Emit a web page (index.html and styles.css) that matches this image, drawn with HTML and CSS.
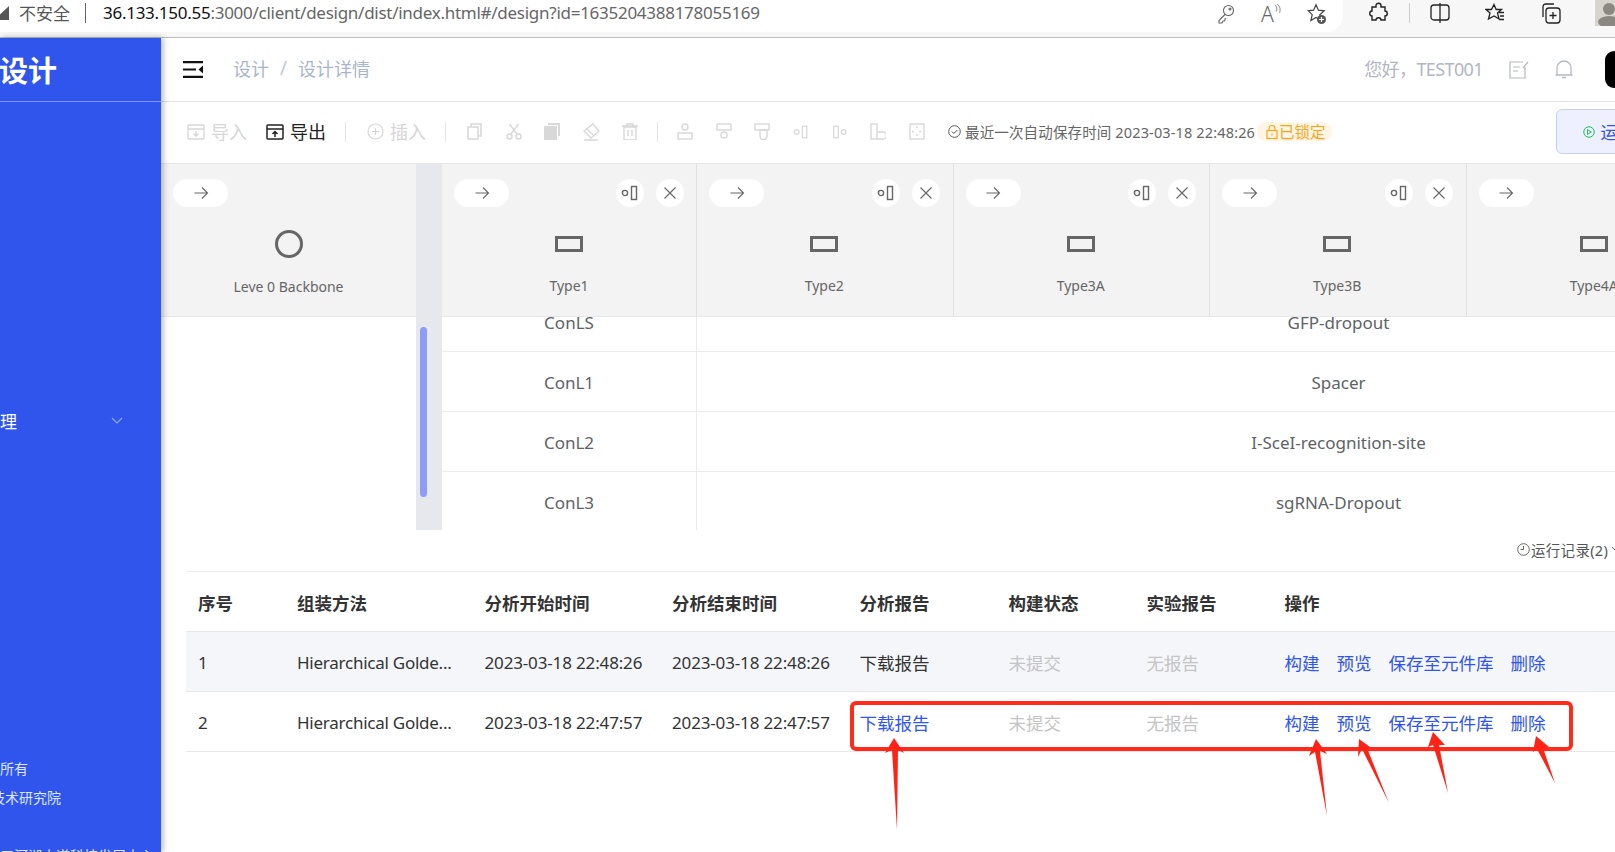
FILE: index.html
```html
<!DOCTYPE html>
<html lang="zh-CN">
<head>
    <meta charset="UTF-8">
    <meta name="viewport" content="width=device-width, initial-scale=1.0">
    <title>设计详情</title>
    <link rel="stylesheet" href="styles.css">
</head>
<body>
    <svg class="defs" width="0" height="0">
        <symbol id="arrow-right" viewBox="0 0 16 16"><path d="M1.5 8h13M9 2.5 14.5 8 9 13.5" fill="none" stroke="currentColor" stroke-width="1.1"/></symbol>
        <symbol id="left-node" viewBox="0 0 18 16"><circle cx="4" cy="8" r="2.6" fill="none" stroke="currentColor" stroke-width="1.4"/><rect x="10.5" y="1.5" width="5" height="13" fill="none" stroke="currentColor" stroke-width="1.4"/></symbol>
        <symbol id="right-node" viewBox="0 0 18 16"><rect x="2" y="1.5" width="5" height="13" fill="none" stroke="currentColor" stroke-width="1.4"/><circle cx="13" cy="8" r="2.6" fill="none" stroke="currentColor" stroke-width="1.4"/></symbol>
        <symbol id="close" viewBox="0 0 16 16"><path d="M2.5 2.5l11 11M13.5 2.5l-11 11" fill="none" stroke="currentColor" stroke-width="1.1"/></symbol>
        <symbol id="part" viewBox="0 0 28 16"><rect x="1.5" y="1.5" width="25" height="13" fill="none" stroke="currentColor" stroke-width="3"/></symbol>
    </svg>

    <header class="browser-bar">
        <div class="address">
            <svg class="warn" width="9" height="16" viewBox="0 0 9 16"><path d="M9 1v14H-6z" fill="#555"/></svg>
            <span class="not-safe">不安全</span>
            <span class="address-sep"></span>
            <span class="url"><b>36.133.150.55</b>:3000/client/design/dist/index.html#/design?id=1635204388178055169</span>
            <div class="address-icons">
                <svg width="18" height="20" viewBox="0 0 18 20" fill="none" stroke="#666" stroke-width="1.1"><circle cx="11.5" cy="6.5" r="5"/><circle cx="13" cy="5" r="1"/><path d="M8 10.5 2 16.500v2.500h3l1-2h1.500l1-3"/></svg>
                <span class="read-aloud">A<svg width="9" height="14" viewBox="0 0 9 14" fill="none" stroke="#666"><path d="M1 2c3 2 3 5 2 8M4 1c4 3 4 7 3 11"/></svg></span>
                <svg width="20" height="22" viewBox="0 0 20 22"><path d="M9 1.800l2.400 5.400 5.800.6-4.400 3.900 1.300 5.800-5.100-3-5.100 3 1.300-5.800L1.300 7.800l5.300-.6z" fill="#fff" stroke="#444" stroke-width="1.2"/><circle cx="14.500" cy="16.500" r="4.500" fill="#555"/><path d="M14.500 14v5M12 16.500h5" stroke="#fff" stroke-width="1.2"/></svg>
            </div>
        </div>
        <div class="browser-icons">
            <svg width="20" height="22" viewBox="0 0 20 22" fill="none" stroke="#222" stroke-width="1.400"><path d="M7 3.500c0-3 5-3 5 0V5h4v4c3 0 3 5 0 5v4h-4c0-3-5-3-5 0H3v-4c-3 0-3-5 0-5V5h4z"/></svg>
            <span class="bar-sep"></span>
            <svg width="20" height="22" viewBox="0 0 20 22" fill="none" stroke="#222" stroke-width="1.300"><rect x="1" y="3" width="18" height="15" rx="3"/><path d="M10 1v20"/></svg>
            <svg class="fav" width="20" height="20" viewBox="0 0 20 20" fill="none" stroke="#222" stroke-width="1.300"><path d="M9 1.500l2.200 5h5.300l-4 3.500 1.500 6-5-3-5.500 3 1.500-6-4-3.500h5.500zM14 9.500h5M15 13h4M14 16.500h5"/></svg>
            <svg class="collect" width="20" height="22" viewBox="0 0 20 22" fill="none" stroke="#222" stroke-width="1.300"><rect x="5" y="6" width="14" height="15" rx="3"/><path d="M2 15V5c0-2 1-3 3-3h8M12 10v7M8.500 13.500h7"/></svg>
            <svg class="profile" width="20" height="27" viewBox="0 0 20 27"><rect width="20" height="27" fill="#d6d4cf"/><circle cx="14" cy="10" r="6" fill="#8a8880"/><ellipse cx="14" cy="23" rx="11" ry="6" fill="#8a8880"/></svg>
        </div>
    </header>

    <div class="app">
        <aside class="sidebar">
            <div class="logo">设计</div>
            <div class="menu-item">
                <span class="menu-text">管理</span>
                <svg width="12" height="7" viewBox="0 0 12 7" fill="none" stroke="#8ea4f5" stroke-width="1.200"><path d="M1 1l5 5 5-5"/></svg>
            </div>
            <ul class="foot-list">
                <li>所有</li>
                <li class="foot-tech">技术研究院</li>
                <li class="foot-bit">司</li>
                <li>三河湖水道科技发展中心</li>
            </ul>
        </aside>

        <main class="main">
            <div class="topbar">
                <svg class="menu-toggle" width="20" height="17" viewBox="0 0 20 17"><path d="M0 0h20v2.200H0zM0 14.800h20V17H0zM0 7.400h13v2.200H0zM20 4.500v8l-4.500-4z" fill="#111"/></svg>
                <span class="crumb">设计</span>
                <span class="crumb-sep">/</span>
                <span class="crumb">设计详情</span>
                <span class="hello">您好，TEST001</span>
                <svg class="top-icon" width="20" height="18" viewBox="0 0 20 18" fill="none" stroke="#b4b8c4" stroke-width="1.200"><path d="M16 6v11H1V1h13M4 6h7M4 10h5M14 7l5-6"/></svg>
                <svg class="top-icon bell" width="18" height="19" viewBox="0 0 18 19" fill="none" stroke="#b4b8c4" stroke-width="1.300"><path d="M2 15V8a7 7 0 0 1 14 0v7zM.5 15h17M7 17.500h4"/></svg>
                <span class="avatar"></span>
            </div>

            <div class="toolbar">
                <span class="tool tool-off">
                    <svg width="18" height="16" viewBox="0 0 18 16" fill="none" stroke="currentColor" stroke-width="1.300"><rect x="1" y="1" width="16" height="14" rx="1"/><path d="M1 5h16M9 7v5M6.500 9.500 9 12l2.500-2.500"/></svg><span class="tool-text">导入</span>
                </span>
                <span class="tool tool-export">
                    <svg width="18" height="16" viewBox="0 0 18 16" fill="none" stroke="#222" stroke-width="1.500"><rect x="1" y="1" width="16" height="14" rx="1"/><path d="M1 5h16M9 13V8M6.500 10 9 7.500l2.500 2.500"/></svg><span class="tool-text">导出</span>
                </span>
                <span class="tool-sep"></span>
                <span class="tool tool-off">
                    <svg width="17" height="17" viewBox="0 0 17 17" fill="none" stroke="currentColor" stroke-width="1.200"><circle cx="8.500" cy="8.500" r="7.500"/><path d="M8.500 5v7M5 8.500h7"/></svg><span class="tool-text">插入</span>
                </span>
                <span class="tool-sep"></span>
                <div class="tool-icons">
                    <svg width="16" height="17" viewBox="0 0 16 17" fill="none" stroke="#d8d8d8" stroke-width="1.500"><rect x="1" y="4" width="10" height="12"/><path d="M4 4V1h10v12h-3"/></svg>
                    <svg width="16" height="17" viewBox="0 0 16 17" fill="none" stroke="#d8d8d8" stroke-width="1.500"><circle cx="3.500" cy="13.500" r="2.500"/><circle cx="12.500" cy="13.500" r="2.500"/><path d="M5 11 12.500 1M11 11 3.500 1"/></svg>
                    <svg width="16" height="17" viewBox="0 0 16 17"><path d="M4 0h12v13h-2V2H4z" fill="#d8d8d8"/><rect y="3" width="13" height="14" fill="#d8d8d8"/></svg>
                    <svg class="eraser" width="18" height="18" viewBox="0 0 18 18" fill="none" stroke="#d8d8d8" stroke-width="1.300"><path d="M11 1l6 7-8 7-7-7zM4 5l7 7M2 17h14"/></svg>
                    <svg width="16" height="17" viewBox="0 0 16 17" fill="none" stroke="#d8d8d8" stroke-width="1.400"><path d="M2 4h12v13H2zM0 3h16M5 3V1h6v2M6 7v6M10 7v6"/></svg>
                    <span class="tool-sep icon-sep"></span>
                    <svg width="16" height="17" viewBox="0 0 16 17" fill="none" stroke="#d8d8d8" stroke-width="1.400"><circle cx="8" cy="4" r="3"/><rect x="1" y="10" width="14" height="6"/></svg>
                    <svg width="16" height="17" viewBox="0 0 16 17" fill="none" stroke="#d8d8d8" stroke-width="1.400"><rect x="1" y="1" width="14" height="6"/><circle cx="8" cy="12" r="3"/></svg>
                    <svg width="16" height="17" viewBox="0 0 16 17" fill="none" stroke="#d8d8d8" stroke-width="1.400"><rect x="1" y="1" width="14" height="6"/><path d="M6 7h7v6a3 3 0 0 1-7 0z"/></svg>
                    <svg width="16" height="16" viewBox="0 0 18 16" color="#d8d8d8"><use href="#left-node"/></svg>
                    <svg width="16" height="16" viewBox="0 0 18 16" color="#d8d8d8"><use href="#right-node"/></svg>
                    <svg width="16" height="17" viewBox="0 0 16 17" fill="none" stroke="#d8d8d8" stroke-width="1.400"><rect x="1" y="1" width="6" height="15"/><path d="M7 9h6a2.500 2.500 0 0 1 0 7H7"/></svg>
                    <svg width="16" height="17" viewBox="0 0 16 17" fill="none" stroke="#d8d8d8" stroke-width="1.400"><rect x="1" y="1" width="14" height="15"/><path d="M8 3v3M8 11v3M3 8.500h3M10 8.500h3" stroke-dasharray="2 1"/></svg>
                </div>
                <span class="save-info">
                    <svg width="13" height="13" viewBox="0 0 13 13" fill="none" stroke="#555"><circle cx="6.500" cy="6.500" r="5.800"/><path d="M3.800 6.500l2 2 3.500-3.500"/></svg>
                    最近一次自动保存时间 2023-03-18 22:48:26
                </span>
                <span class="locked">
                    <svg width="12" height="14" viewBox="0 0 12 14" fill="none" stroke="#faa41a" stroke-width="1.200"><rect x="1" y="5.500" width="10" height="8"/><path d="M3 5.500V3.500a3 3 0 0 1 6 0v2M6 8.500v2"/></svg>已锁定
                </span>
                <span class="run-btn">
                    <svg width="16" height="16" viewBox="0 0 16 16" fill="none" stroke="#1db954" stroke-width="1.300"><circle cx="8" cy="8" r="7"/><path d="M6 4.800 11 8l-5 3.200z"/></svg>运行
                </span>
            </div>

            <div class="parts">
                <div class="part part-base">
                    <div class="part-actions"><span class="pill"><svg width="16" height="16"><use href="#arrow-right"/></svg></span></div>
                    <span class="base-ring"></span>
                    <span class="part-name">Leve 0 Backbone</span>
                </div>
                <div class="strip"></div>
                <div class="part part-wide">
                    <div class="part-actions"><span class="pill"><svg width="16" height="16"><use href="#arrow-right"/></svg></span><span class="round push"><svg width="18" height="16"><use href="#left-node"/></svg></span><span class="round"><svg width="16" height="16"><use href="#close"/></svg></span></div>
                    <svg class="part-icon" width="28" height="16"><use href="#part"/></svg>
                    <span class="part-name">Type1</span>
                </div>
                <div class="part">
                    <div class="part-actions"><span class="pill"><svg width="16" height="16"><use href="#arrow-right"/></svg></span><span class="round push"><svg width="18" height="16"><use href="#left-node"/></svg></span><span class="round"><svg width="16" height="16"><use href="#close"/></svg></span></div>
                    <svg class="part-icon" width="28" height="16"><use href="#part"/></svg>
                    <span class="part-name">Type2</span>
                </div>
                <div class="part">
                    <div class="part-actions"><span class="pill"><svg width="16" height="16"><use href="#arrow-right"/></svg></span><span class="round push"><svg width="18" height="16"><use href="#left-node"/></svg></span><span class="round"><svg width="16" height="16"><use href="#close"/></svg></span></div>
                    <svg class="part-icon" width="28" height="16"><use href="#part"/></svg>
                    <span class="part-name">Type3A</span>
                </div>
                <div class="part">
                    <div class="part-actions"><span class="pill"><svg width="16" height="16"><use href="#arrow-right"/></svg></span><span class="round push"><svg width="18" height="16"><use href="#left-node"/></svg></span><span class="round"><svg width="16" height="16"><use href="#close"/></svg></span></div>
                    <svg class="part-icon" width="28" height="16"><use href="#part"/></svg>
                    <span class="part-name">Type3B</span>
                </div>
                <div class="part">
                    <div class="part-actions"><span class="pill"><svg width="16" height="16"><use href="#arrow-right"/></svg></span></div>
                    <svg class="part-icon" width="28" height="16"><use href="#part"/></svg>
                    <span class="part-name">Type4A</span>
                </div>
            </div>

            <div class="seq-body">
                <div class="seq-blank"></div>
                <div class="strip"><span class="thumb"></span></div>
                <div class="seq-rows">
                    <div class="seq-row seq-row-cut"><span class="seq-a">ConLS</span><span class="seq-b">GFP-dropout</span></div>
                    <div class="seq-row"><span class="seq-a">ConL1</span><span class="seq-b">Spacer</span></div>
                    <div class="seq-row"><span class="seq-a">ConL2</span><span class="seq-b">I-SceI-recognition-site</span></div>
                    <div class="seq-row"><span class="seq-a">ConL3</span><span class="seq-b">sgRNA-Dropout</span></div>
                </div>
            </div>

            <div class="run-log">
                <svg width="13" height="13" viewBox="0 0 13 13" fill="none" stroke="#666"><circle cx="6.500" cy="6.500" r="5.800"/><path d="M6.500 3v3.500H3.500"/></svg>
                <span>运行记录(2)</span>
                <svg class="log-chevron" width="10" height="6" viewBox="0 0 10 6" fill="none" stroke="#666"><path d="M1 1l4 4 4-4"/></svg>
            </div>

            <table class="runs">
                <thead>
                    <tr>
                        <th class="c-no">序号</th>
                        <th class="c-way">组装方法</th>
                        <th class="c-time">分析开始时间</th>
                        <th class="c-time">分析结束时间</th>
                        <th class="c-report">分析报告</th>
                        <th class="c-state">构建状态</th>
                        <th class="c-state">实验报告</th>
                        <th>操作</th>
                    </tr>
                </thead>
                <tbody>
                    <tr class="row-hover">
                        <td>1</td>
                        <td class="way">Hierarchical Golde...</td>
                        <td>2023-03-18 22:48:26</td>
                        <td>2023-03-18 22:48:26</td>
                        <td>下载报告</td>
                        <td class="muted">未提交</td>
                        <td class="muted">无报告</td>
                        <td class="ops"><a>构建</a><a>预览</a><a>保存至元件库</a><a>删除</a></td>
                    </tr>
                    <tr>
                        <td>2</td>
                        <td class="way">Hierarchical Golde...</td>
                        <td>2023-03-18 22:47:57</td>
                        <td>2023-03-18 22:47:57</td>
                        <td class="ops"><a>下载报告</a></td>
                        <td class="muted">未提交</td>
                        <td class="muted">无报告</td>
                        <td class="ops"><a>构建</a><a>预览</a><a>保存至元件库</a><a>删除</a></td>
                    </tr>
                </tbody>
            </table>
        </main>
    </div>

    <!-- red marks drawn over the page -->
    <div class="red-box"></div>
    <svg class="red-arrows" width="1615" height="852" viewBox="0 0 1615 852">
        <path d="M894 738 904 753 898 750 897 830 892 750 885 753z"/>
        <path d="M1316 739 1327 754 1320 751 1327 816 1315 752 1309 756z"/>
        <path d="M1359 739 1370 747 1367 748 1389 803 1362 749 1358 757z"/>
        <path d="M1433 732 1445 745 1439 745 1448 793 1433 745 1428 747z"/>
        <path d="M1536 736 1549 747 1543 748 1555 783 1537 749 1533 752z"/>
    </svg>
</body>
</html>
```

FILE: styles.css
```css
* {
    box-sizing: border-box;
}

html, body {
    margin: 0;
    padding: 0;
    width: 1615px;
    height: 852px;
    overflow: hidden;
    background-color: #fff;
    font-family: "Noto Sans", "Noto Sans CJK SC", sans-serif;
    color: #333;
}

.defs {
    position: absolute;
}

/* browser chrome */
.browser-bar {
    height: 38px;
    display: flex;
    background-color: #f7f7f7;
    border-bottom: 1px solid #bdbdbd;
}

.address {
    width: 1345px;
    height: 32px;
    display: flex;
    align-items: center;
    padding-bottom: 7px;
    background-color: #fff;
    border-bottom-right-radius: 16px;
    font-size: 17px;
}

.warn {
    margin-right: 10px;
}

.not-safe {
    width: 52px;
    color: #555;
    white-space: nowrap;
}

.address-sep {
    width: 1px;
    height: 20px;
    margin: 0 17px 0 14px;
    background-color: #666;
}

.url {
    color: #666;
    letter-spacing: -0.27px;
    white-space: nowrap;
}

.url b {
    font-weight: 400;
    color: #111;
}

.address-icons {
    display: flex;
    align-items: center;
    gap: 26px;
    position: absolute;
    left: 1217px;
    top: 2px;
}

.read-aloud {
    display: flex;
    width: 20px;
    font-size: 21px;
    line-height: 24px;
    color: #666;
    font-weight: 300;
}

.browser-icons {
    flex: 1;
    height: 32px;
    display: flex;
    align-items: center;
    padding: 0 0 7px 26px;
}

.bar-sep {
    width: 1px;
    height: 20px;
    margin: 0 20px;
    background-color: #ccc;
}

.fav {
    margin-left: 35px;
}

.collect {
    margin-left: 36px;
}

.profile {
    margin-left: 34px;
}

.app {
    display: flex;
    height: 814px;
}

/* sidebar */
.sidebar {
    width: 161px;
    flex: none;
    position: relative;
    overflow: hidden;
    background-color: #2f55ed;
    box-shadow: 2px 0 6px rgba(0, 0, 0, 0.3);
    color: #fff;
}

.logo {
    height: 64px;
    margin-left: -1px;
    font-size: 29px;
    font-weight: 700;
    line-height: 65px;
    border-bottom: 1px solid #7e97f5;
}

.menu-item {
    display: flex;
    justify-content: space-between;
    align-items: center;
    height: 24px;
    margin-top: 306px;
    padding-right: 38px;
    font-size: 17px;
}

.menu-text {
    margin-left: -17px;
}

.foot-list {
    list-style: none;
    margin: 322px 0 0;
    padding: 0;
    font-size: 14px;
    line-height: 29px;
    color: #dfe5fc;
}

.foot-list li {
    white-space: nowrap;
}

.foot-tech {
    margin-left: -9px;
}

.foot-bit {
    margin-left: -13px;
}

/* main column */
.main {
    flex: 1;
    min-width: 0;
    overflow: hidden;
}

.topbar {
    height: 64px;
    display: flex;
    align-items: center;
    padding-left: 22px;
    border-bottom: 1px solid #e4e4e4;
    font-size: 18px;
    color: #a9b6c9;
}

.menu-toggle {
    margin-right: 30px;
}

.crumb,
.crumb-sep,
.hello {
    margin-bottom: 3px;
}

.crumb-sep {
    margin-left: 11px;
    margin-right: 11px;
    font-size: 19px;
    color: #c0c6d2;
}

.hello {
    margin-left: auto;
    color: #b2b6c2;
    letter-spacing: -0.6px;
}

.top-icon {
    margin-left: 26px;
}

.bell {
    margin-left: 26px;
}

.avatar {
    width: 30px;
    height: 37px;
    margin-left: 32px;
    margin-right: -20px;
    background-color: #000;
    border-radius: 9px;
}

.toolbar {
    height: 61px;
    display: flex;
    align-items: center;
    padding: 0 0 2px 26px;
    white-space: nowrap;
    font-size: 18px;
}

.toolbar > * {
    flex: none;
}

.tool {
    display: flex;
    align-items: center;
    gap: 6px;
}

.tool-text {
    margin-bottom: 2px;
}

.tool-off {
    color: #d6d6d6;
}

.tool-export {
    margin-left: 19px;
    color: #222;
}

.tool-sep {
    width: 1px;
    height: 20px;
    margin: 0 21px 0 19px;
    background-color: #e6e6e6;
}

.tool-icons {
    display: flex;
    align-items: center;
    gap: 22.7px;
}

.eraser {
    margin: 0 -1px;
}

.icon-sep {
    margin: 0 -3.7px 0 -3.5px;
}

.save-info {
    display: flex;
    align-items: center;
    gap: 4px;
    margin-left: 23px;
    font-size: 14.5px;
    letter-spacing: 0.14px;
    color: #666;
}

.locked {
    display: flex;
    align-items: center;
    gap: 1px;
    height: 19px;
    padding: 0 6px 0 9px;
    margin-left: 2px;
    background-color: #fff5e4;
    border-radius: 9px;
    font-size: 15.5px;
    color: #faa41a;
}

.run-btn {
    display: flex;
    align-items: center;
    gap: 6px;
    width: 80px;
    height: 45px;
    margin-left: 224px;
    padding-left: 26px;
    background-color: #eef1fd;
    border: 1px solid #c6cff6;
    border-radius: 6px;
    font-size: 17px;
    color: #2f55ed;
}

/* parts header */
.parts {
    height: 154px;
    display: flex;
    background-color: #f3f3f4;
    border-top: 1px solid #e8e8e8;
    border-bottom: 1px solid #e8e8e8;
}

.part {
    width: 256.5px;
    flex: none;
    display: flex;
    flex-direction: column;
    align-items: center;
    padding: 15px 13px 0 12px;
    border-left: 1px solid #e0e0e0;
    font-size: 14px;
    color: #666;
}

.part-wide {
    width: 254px;
    padding: 15px 12px 0;
    border-left: 0;
}

.part-base {
    width: 255px;
    padding: 15px 12px 0;
    border-left: 0;
}

.part-actions {
    width: 100%;
    display: flex;
    gap: 12px;
    color: #666;
}

.pill,
.round {
    height: 28px;
    display: flex;
    align-items: center;
    justify-content: center;
    background-color: #fff;
    border-radius: 14px;
}

.pill {
    width: 55px;
}

.round {
    width: 28px;
}

.push {
    margin-left: auto;
}

.part-icon {
    margin-top: 29px;
    color: #666;
}

.base-ring {
    width: 28px;
    height: 28px;
    margin-top: 23px;
    border: 3px solid #666;
    border-radius: 50%;
}

.part-name {
    margin-top: 24px;
    line-height: 20px;
    white-space: nowrap;
}

.part-base .part-name {
    margin-top: 19px;
}

.strip {
    width: 26px;
    flex: none;
    position: relative;
    background-color: #e6e8ee;
}

.thumb {
    position: absolute;
    left: 4px;
    top: 10px;
    width: 7px;
    height: 170px;
    background-color: #8f9cf5;
    border-radius: 4px;
}

/* sequence rows */
.seq-body {
    height: 213px;
    display: flex;
    overflow: hidden;
}

.seq-blank {
    width: 255px;
    flex: none;
}

.seq-rows {
    flex: none;
}

.seq-row {
    height: 60px;
    display: flex;
    align-items: center;
    padding-top: 2px;
    border-bottom: 1px solid #ececec;
    font-size: 17px;
    color: #606266;
}

.seq-row-cut {
    height: 35px;
    align-items: flex-end;
    line-height: 24px;
    padding-top: 0;
    padding-bottom: 16px;
}

.seq-a {
    width: 254px;
    text-align: center;
}

.seq-b {
    width: 1284px;
    align-self: stretch;
    display: flex;
    align-items: center;
    justify-content: center;
    margin-top: -2px;
    padding-top: 2px;
    border-left: 1px solid #ececec;
}

.seq-row-cut .seq-b {
    align-items: flex-end;
    margin-top: 0;
    margin-bottom: -16px;
    padding-top: 0;
    padding-bottom: 16px;
}

/* run table */
.run-log {
    height: 41px;
    display: flex;
    align-items: center;
    gap: 1px;
    padding: 0 0 3px 1356px;
    font-size: 14.5px;
    letter-spacing: 0.3px;
    color: #555;
    white-space: nowrap;
}

.run-log svg {
    flex: none;
}

.log-chevron {
    margin-left: 2px;
}

.runs {
    width: 1429px;
    margin-left: 25px;
    border-collapse: collapse;
    table-layout: fixed;
    font-size: 17.5px;
    color: #333;
    border-top: 1px solid #ececec;
}

.runs th,
.runs td {
    height: 60px;
    padding: 2px 12px 0;
    text-align: left;
    white-space: nowrap;
    border-bottom: 1px solid #e8e8e8;
}

.runs th {
    font-weight: 700;
}

.runs td:nth-child(-n+4) {
    font-size: 17px;
    letter-spacing: -0.15px;
}

.runs td.way {
    letter-spacing: -0.25px;
}

.c-no {
    width: 99px;
}

.c-way,
.c-time {
    width: 187.5px;
}

.c-report {
    width: 149px;
}

.c-state {
    width: 138px;
}

.row-hover td {
    background-color: #f5f6fa;
}

.muted {
    color: #c4c4c4;
}

.ops a {
    margin-right: 17px;
    color: #2f55ed;
}

.ops a:last-child {
    margin-right: 0;
}

/* red annotation */
.red-box {
    position: absolute;
    left: 850px;
    top: 701px;
    width: 723px;
    height: 50px;
    border: 4px solid #ff2a1a;
    border-radius: 6px;
}

.red-arrows {
    position: absolute;
    left: 0;
    top: 0;
    fill: #ff2316;
}
```
